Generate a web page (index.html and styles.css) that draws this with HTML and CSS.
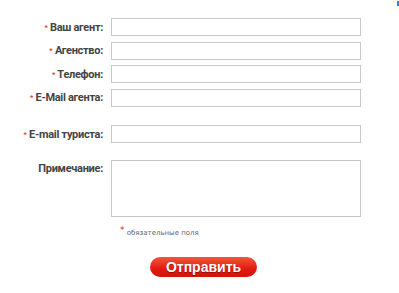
FILE: index.html
```html
<!DOCTYPE html>
<html lang="ru">
<head>
  <meta charset="UTF-8">
  <title>Заявка агента</title>
  <link rel="stylesheet" href="styles.css">
</head>
<body>
  <span class="corner-mark"></span>
  <form class="agent-form">
    <div class="row">
      <label class="label"><span class="req">*</span> Ваш агент:</label>
      <input type="text" class="field">
    </div>
    <div class="row">
      <label class="label"><span class="req">*</span> Агенство:</label>
      <input type="text" class="field">
    </div>
    <div class="row">
      <label class="label"><span class="req">*</span> Телефон:</label>
      <input type="text" class="field">
    </div>
    <div class="row">
      <label class="label"><span class="req">*</span> E-Mail агента:</label>
      <input type="text" class="field">
    </div>
    <div class="row row-spaced">
      <label class="label"><span class="req">*</span> E-mail туриста:</label>
      <input type="text" class="field">
    </div>
    <div class="row row-note">
      <label class="label">Примечание:</label>
      <textarea class="field area"></textarea>
    </div>
    <p class="hint"><span class="req">*</span> обязательные поля</p>
    <div class="actions">
      <button type="submit" class="send">Отправить</button>
    </div>
  </form>
</body>
</html>
```

FILE: styles.css
```css
/* форма заявки агента */
body {
  margin: 0;
  background: #fff;
  font-family: Roboto, sans-serif;
  position: relative;
}
.corner-mark {
  position: absolute;
  right: 0;
  top: 1px;
  width: 2px;
  height: 5px;
  background: #3a7fd0;
}
.agent-form {
  padding-top: 18px;
}
.row {
  display: flex;
  align-items: center;
  margin-bottom: 5.5px;
}
.row-spaced {
  margin-top: 18.5px;
}
.row-note {
  margin-top: 16.5px;
  align-items: flex-start;
}
.label {
  width: 103px;
  padding-right: 8px;
  text-align: right;
  font-size: 11px;
  font-weight: bold;
  letter-spacing: -0.3px;
  color: #444;
  white-space: nowrap;
}
.row-note .label {
  padding-top: 2px;
}
.req {
  color: #d22;
  font-size: 8px;
  font-weight: normal;
  vertical-align: 1px;
}
.field {
  box-sizing: border-box;
  width: 250px;
  height: 18px;
  margin: 0;
  border: 1px solid #c8c8c8;
  padding: 0 3px;
  background: #fff;
}
.area {
  height: 57px;
  resize: none;
}
.hint {
  margin: 8px 0 0 120px;
  font-family: 'DejaVu Sans', sans-serif;
  font-size: 7px;
  color: #666;
}
.hint .req {
  font-size: 9px;
  vertical-align: 2px;
}
.actions {
  padding: 20px 0 0 150px;
}
.send {
  width: 107px;
  height: 20px;
  border: none;
  border-radius: 10px;
  background: linear-gradient(#f6553a, #e21a12 60%, #d0140c);
  color: #fff;
  font-family: 'Liberation Sans', Arial, sans-serif;
  font-size: 14px;
  font-weight: bold;
  text-shadow: 0 1px 1px rgba(0,0,0,0.35);
  padding: 0;
  cursor: pointer;
}
```
